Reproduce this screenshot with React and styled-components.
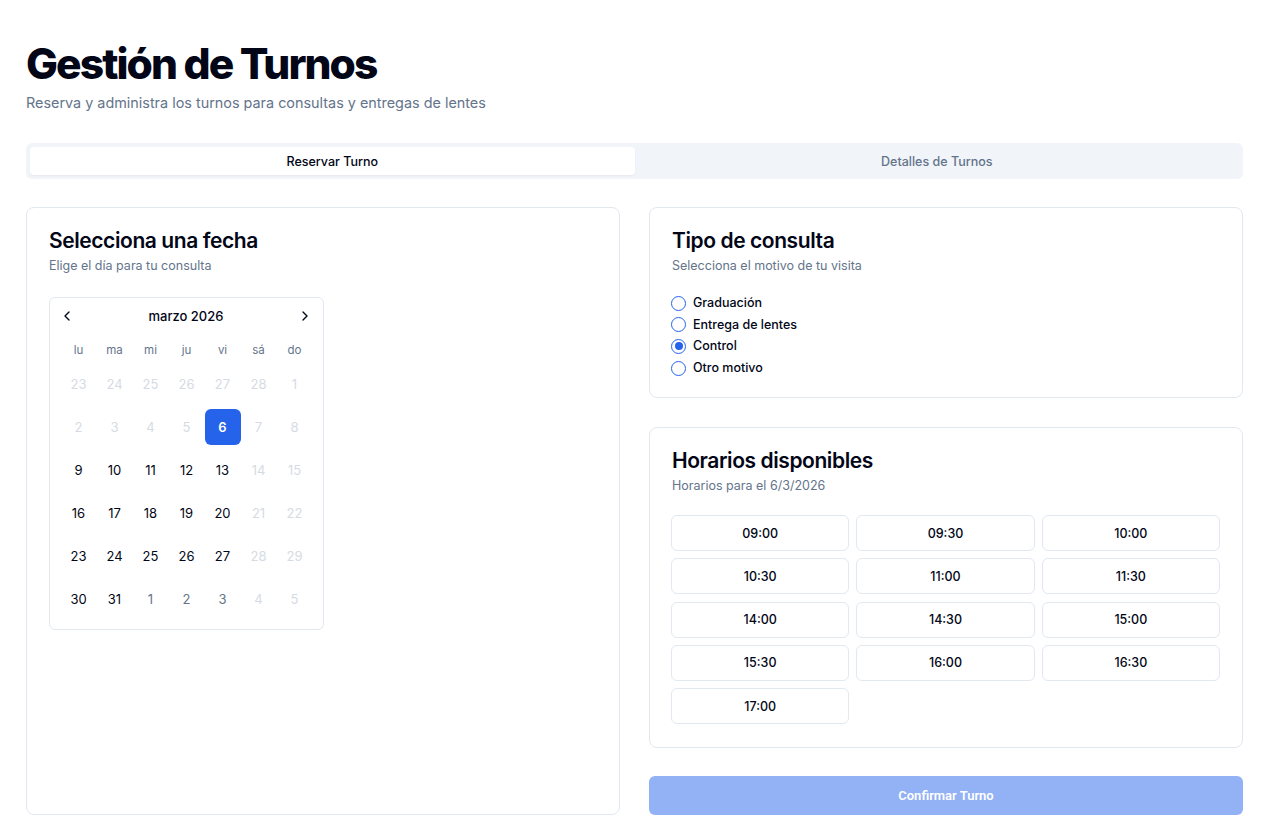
import styled, { createGlobalStyle } from 'styled-components';

const GlobalStyle = createGlobalStyle`
  * { box-sizing: border-box; }
  body {
    margin: 0;
    background: #ffffff;
    font-family: Inter, "Noto Sans", sans-serif;
    color: #020617;
  }
  button { font-family: inherit; }
`;

const weekDays = ['lu', 'ma', 'mi', 'ju', 'vi', 'sá', 'do'];

// tone: muted (outside month), disabled (past / weekend), normal, selected
const weeks = [
  [[23, 'disabled'], [24, 'disabled'], [25, 'disabled'], [26, 'disabled'], [27, 'disabled'], [28, 'disabled'], [1, 'disabled']],
  [[2, 'disabled'], [3, 'disabled'], [4, 'disabled'], [5, 'disabled'], [6, 'selected'], [7, 'disabled'], [8, 'disabled']],
  [[9, 'normal'], [10, 'normal'], [11, 'normal'], [12, 'normal'], [13, 'normal'], [14, 'disabled'], [15, 'disabled']],
  [[16, 'normal'], [17, 'normal'], [18, 'normal'], [19, 'normal'], [20, 'normal'], [21, 'disabled'], [22, 'disabled']],
  [[23, 'normal'], [24, 'normal'], [25, 'normal'], [26, 'normal'], [27, 'normal'], [28, 'disabled'], [29, 'disabled']],
  [[30, 'normal'], [31, 'normal'], [1, 'muted'], [2, 'muted'], [3, 'muted'], [4, 'disabled'], [5, 'disabled']],
];

const motivos = ['Graduación', 'Entrega de lentes', 'Control', 'Otro motivo'];
const horarios = ['09:00', '09:30', '10:00', '10:30', '11:00', '11:30', '14:00', '14:30', '15:00', '15:30', '16:00', '16:30', '17:00'];

const App = () => {
  return (
    <Page>
      <GlobalStyle />
      <Title>Gestión de Turnos</Title>
      <Subtitle>Reserva y administra los turnos para consultas y entregas de lentes</Subtitle>

      <Tabs>
        <Tab $active>Reservar Turno</Tab>
        <Tab>Detalles de Turnos</Tab>
      </Tabs>

      <Columns>
        <Card>
          <CardTitle>Selecciona una fecha</CardTitle>
          <CardDesc>Elige el día para tu consulta</CardDesc>
          <Calendar>
            <CalHeader>
              <NavBtn>
                <svg width="16" height="16" viewBox="0 0 24 24" fill="none" stroke="currentColor" strokeWidth="2" strokeLinecap="round" strokeLinejoin="round">
                  <path d="m15 18-6-6 6-6" />
                </svg>
              </NavBtn>
              <Month>marzo 2026</Month>
              <NavBtn>
                <svg width="16" height="16" viewBox="0 0 24 24" fill="none" stroke="currentColor" strokeWidth="2" strokeLinecap="round" strokeLinejoin="round">
                  <path d="m9 18 6-6-6-6" />
                </svg>
              </NavBtn>
            </CalHeader>
            <WeekRow>
              {weekDays.map((d) => (
                <WeekDay key={d}>{d}</WeekDay>
              ))}
            </WeekRow>
            <DayGrid>
              {weeks.flat().map(([n, tone], i) => (
                <Day key={i} $tone={tone}>{n}</Day>
              ))}
            </DayGrid>
          </Calendar>
        </Card>

        <RightCol>
          <Card $compact>
            <CardTitle>Tipo de consulta</CardTitle>
            <CardDesc>Selecciona el motivo de tu visita</CardDesc>
            <RadioList>
              {motivos.map((m) => (
                <RadioRow key={m}>
                  <Radio $checked={m === 'Control'} />
                  {m}
                </RadioRow>
              ))}
            </RadioList>
          </Card>

          <Card>
            <CardTitle>Horarios disponibles</CardTitle>
            <CardDesc>Horarios para el 6/3/2026</CardDesc>
            <SlotGrid>
              {horarios.map((h) => (
                <Slot key={h}>{h}</Slot>
              ))}
            </SlotGrid>
          </Card>

          <ConfirmBtn>Confirmar Turno</ConfirmBtn>
        </RightCol>
      </Columns>
    </Page>
  );
};

export default App;

const Page = styled.div`
  padding: 36px 29px 12px 26px;
`;

const Title = styled.h1`
  margin: 0;
  font-size: 42.5px;
  line-height: 56px;
  font-weight: 800;
  letter-spacing: -0.045em;
  color: #020617;
`;

const Subtitle = styled.p`
  margin: 1px 0 0;
  font-size: 14.4px;
  line-height: 20px;
  color: #64748b;
`;

const Tabs = styled.div`
  margin-top: 30px;
  height: 36px;
  padding: 4px;
  border-radius: 6px;
  background: #f1f5f9;
  display: grid;
  grid-template-columns: 1fr 1fr;
`;

const Tab = styled.button`
  border: none;
  border-radius: 4px;
  background: ${(p) => (p.$active ? '#ffffff' : 'transparent')};
  box-shadow: ${(p) => (p.$active ? '0 1px 2px rgba(0,0,0,0.05)' : 'none')};
  color: ${(p) => (p.$active ? '#020617' : '#64748b')};
  font-size: 12.5px;
  font-weight: 500;
`;

const Columns = styled.div`
  margin-top: 28px;
  display: grid;
  grid-template-columns: 1fr 1fr;
  gap: 29px;
`;

const RightCol = styled.div`
  display: flex;
  flex-direction: column;
  gap: 29px;
`;

const Card = styled.div`
  border: 1px solid #e2e8f0;
  border-radius: 8px;
  background: #ffffff;
  padding: 20px 22px ${(p) => (p.$compact ? '21px' : '23px')};
`;

const CardTitle = styled.h3`
  margin: 0;
  font-size: 21px;
  line-height: 26px;
  font-weight: 600;
  letter-spacing: -0.02em;
`;

const CardDesc = styled.p`
  margin: 3px 0 0;
  font-size: 12.5px;
  line-height: 18px;
  color: #64748b;
`;

const Calendar = styled.div`
  margin-top: 22px;
  width: 275px;
  border: 1px solid #e2e8f0;
  border-radius: 6px;
  padding: 12px 11px 12px;
`;

const CalHeader = styled.div`
  display: flex;
  align-items: center;
  justify-content: space-between;
  height: 12px;
  margin: 0 -1px 0 -2px;
`;

const NavBtn = styled.span`
  display: flex;
  width: 16px;
  height: 16px;
  color: #020617;
`;

const Month = styled.span`
  font-size: 13px;
  font-weight: 500;
`;

const WeekRow = styled.div`
  margin-top: 18px;
  display: grid;
  grid-template-columns: repeat(7, 36px);
  justify-content: center;
  height: 20px;
`;

const WeekDay = styled.div`
  display: flex;
  align-items: center;
  justify-content: center;
  font-size: 11.5px;
  color: #64748b;
`;

const DayGrid = styled.div`
  margin-top: 6px;
  display: grid;
  grid-template-columns: repeat(7, 36px);
  grid-auto-rows: 36px;
  row-gap: 7px;
  justify-content: center;
`;

const toneColor = {
  disabled: '#d6dbe3',
  muted: '#64748b',
  normal: '#020617',
  selected: '#ffffff',
};

const Day = styled.div`
  display: flex;
  align-items: center;
  justify-content: center;
  border-radius: 6px;
  font-size: 13px;
  color: ${(p) => toneColor[p.$tone]};
  background: ${(p) => (p.$tone === 'selected' ? '#2563eb' : 'transparent')};
  font-weight: ${(p) => (p.$tone === 'selected' ? 600 : 400)};
`;

const RadioList = styled.div`
  margin-top: 20px;
  display: flex;
  flex-direction: column;
  gap: 5.7px;
`;

const RadioRow = styled.label`
  display: flex;
  align-items: center;
  gap: 7px;
  font-size: 12.5px;
  font-weight: 500;
  line-height: 16px;
`;

const Radio = styled.span`
  width: 15px;
  height: 15px;
  margin-left: -1px;
  border-radius: 50%;
  border: 1px solid #2563eb;
  display: flex;
  align-items: center;
  justify-content: center;
  &::after {
    content: '';
    width: 8px;
    height: 8px;
    border-radius: 50%;
    background: ${(p) => (p.$checked ? '#2563eb' : 'transparent')};
  }
`;

const SlotGrid = styled.div`
  margin-top: 20px;
  margin-left: -1px;
  display: grid;
  grid-template-columns: repeat(3, 1fr);
  gap: 7.3px 7px;
`;

const Slot = styled.button`
  height: 36px;
  border: 1px solid #e2e8f0;
  border-radius: 6px;
  background: #ffffff;
  color: #020617;
  font-size: 12.5px;
  font-weight: 500;
`;

const ConfirmBtn = styled.button`
  height: 39px;
  margin-top: -1px;
  border: none;
  border-radius: 6px;
  background: #93b1f5;
  color: #ffffff;
  font-family: Roboto, sans-serif;
  font-size: 13px;
  font-weight: 600;
`;
